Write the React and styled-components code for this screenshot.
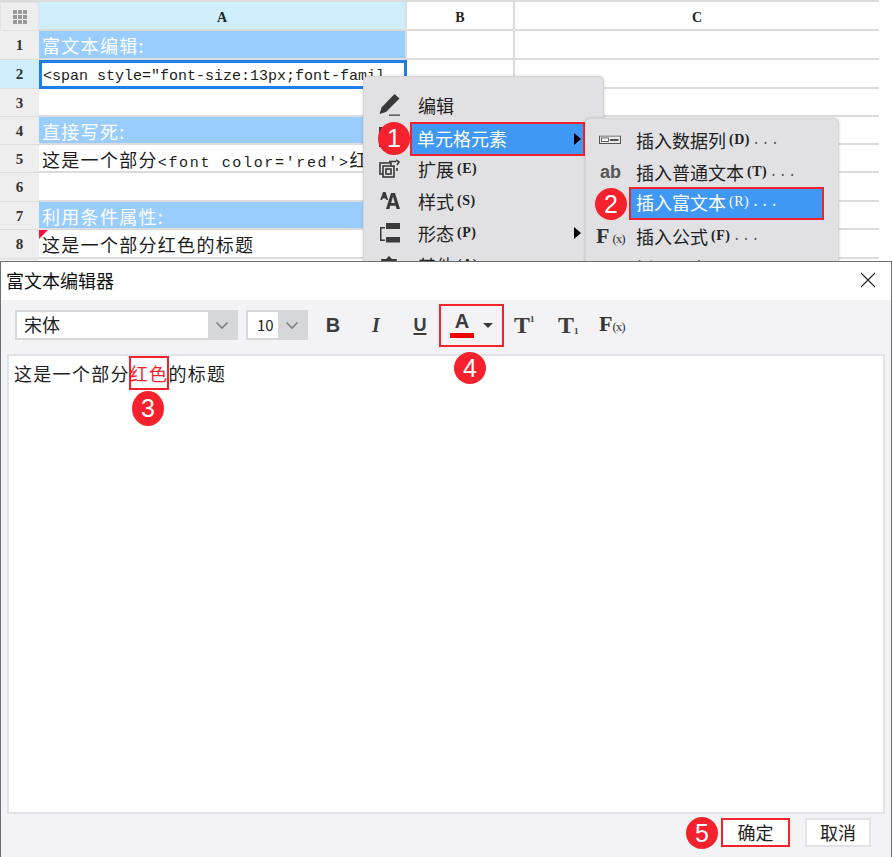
import React from "react";
import styled, { createGlobalStyle } from "styled-components";

const CJK = `"Noto Sans CJK SC", "Liberation Sans", sans-serif`;
const MONO = `"Liberation Mono", "Noto Sans CJK SC", monospace`;

const Global = createGlobalStyle`
  html, body { margin: 0; padding: 0; background: #fff; }
  body { font-family: ${CJK}; color: #1c1c1c; }
  * { box-sizing: border-box; }
`;

const Page = styled.div`
  width: 892px;
  height: 857px;
  overflow: hidden;
  display: flex;
  flex-direction: column;
  position: relative;
`;

const Sheet = styled.div`
  height: 261px;
  position: relative;
  overflow: hidden;
  background: #fff;
  flex: none;
`;

const Grid = styled.div`
  display: grid;
  width: 879px;
  border-top: 2px solid #dcdcdc;
  grid-template-columns: 39px 368px 108px 364px;
  grid-template-rows: 29px 29px 29px 28px 28px 28px 29px 28px 29px 28px;
`;

const Corner = styled.div`
  background: #eeeeee;
  border: 1px solid #e2e2e2;
  display: grid;
  grid-template-columns: repeat(3, 4px);
  grid-auto-rows: 4px;
  gap: 1px;
  justify-content: center;
  align-content: center;
  i { background: #9a9a9a; }
`;

const ColHead = styled.div`
  background: ${p => (p.$active ? "#cfeefb" : "#fff")};
  border-right: ${p => (p.$last ? "0" : "2px solid #dcdcdc")};
  border-bottom: 2px solid #dcdcdc;
  padding-top: 5px;
  display: flex;
  align-items: center;
  justify-content: center;
  font: bold 14px "Liberation Serif", serif;
  color: #222;
`;

const RowHead = styled.div`
  background: ${p => (p.$active ? "#cfeefb" : "#eeeeee")};
  border-bottom: 1px solid #dcdcdc;
  padding-top: 1px;
  display: flex;
  align-items: center;
  justify-content: center;
  font: bold 15px "Liberation Serif", serif;
  color: #333;
`;

const Cell = styled.div`
  position: relative;
  background: ${p => (p.$band ? "#99ccff" : "#fff")};
  color: ${p => (p.$band ? "#fff" : "#1c1c1c")};
  border-right: ${p => (p.$last ? "0" : "2px solid #dcdcdc")};
  border-bottom: 2px solid #dcdcdc;
  padding-left: 3px;
  font-size: 18px;
  letter-spacing: 1.3px;
  line-height: 28px;
  white-space: nowrap;
  overflow: hidden;
  ${p => p.$selected && "border: 3px solid #1f7ce8; line-height: 19px; padding-left: 1px;"}
`;

const Code = styled.span`
  font-family: ${MONO};
  font-size: 15px;
  letter-spacing: ${p => (p.$wide ? "1.65px" : "0")};
`;

const Flag = styled.i`
  position: absolute;
  left: 0;
  top: 0;
  border-top: 9px solid #f01040;
  border-right: 9px solid transparent;
`;

const Menu = styled.div`
  position: absolute;
  left: ${p => p.$x}px;
  top: ${p => p.$y}px;
  width: ${p => p.$w}px;
  padding-top: ${p => p.$pad}px;
  height: 300px;
  background: #e1e1e4;
  border: 1px solid #d5d5d8;
  border-radius: 5px;
  box-shadow: 0 0 3px rgba(0, 0, 0, 0.18);
`;

const MenuItem = styled.div`
  height: 32px;
  display: flex;
  align-items: center;
  position: relative;
  padding-left: ${p => p.$left}px;
  font-size: 18px;
  white-space: nowrap;
  color: #222;
  small {
    font: bold 14px "Liberation Serif", serif;
    margin-left: 3px;
    letter-spacing: 0.5px;
  }
  em {
    font: normal 14px "Liberation Mono", monospace;
    color: #555;
    letter-spacing: 1px;
    margin-left: 2px;
  }
`;

const Highlight = styled.div`
  position: absolute;
  left: ${p => p.$x}px;
  top: ${p => p.$y}px;
  width: ${p => p.$w}px;
  height: ${p => p.$h}px;
  background: #4098f5;
  border: 2px solid #f5222d;
  color: #fff;
  display: flex;
  align-items: center;
  padding: 0 0 3px 5px;
  font-size: 18px;
  white-space: nowrap;
  small { font: 14px "Liberation Serif", serif; margin-left: 3px; letter-spacing: 0.5px; }
  em { font: normal 14px "Liberation Mono", monospace; letter-spacing: 1px; margin-left: 2px; }
`;

const MenuIcon = styled.span`
  position: absolute;
  left: ${p => p.$left}px;
  top: 50%;
  transform: translateY(-50%);
  display: flex;
  color: #3a3a3a;
`;

const Arrow = styled.i`
  position: absolute;
  right: ${p => p.$right}px;
  top: 50%;
  margin-top: -6px;
  border-left: 7px solid #000;
  border-top: 6px solid transparent;
  border-bottom: 6px solid transparent;
`;

const Badge = styled.span`
  position: absolute;
  left: ${p => p.$x}px;
  top: ${p => p.$y}px;
  width: 32px;
  height: ${p => p.$h || 32}px;
  border-radius: 50%;
  background: #f5222d;
  color: #fff;
  font: 25px/32px "Liberation Sans", sans-serif;
  line-height: ${p => p.$h || 32}px;
  letter-spacing: 0;
  text-align: center;
  z-index: 5;
`;

const Dialog = styled.div`
  flex: 1;
  display: flex;
  flex-direction: column;
  border: 1px solid #6e6e6e;
  border-bottom: 0;
  background: #f3f3f5;
`;

const TitleBar = styled.div`
  height: 38px;
  flex: none;
  background: #fff;
  display: flex;
  align-items: center;
  justify-content: space-between;
  padding: 0 15px 3px 5px;
  font-size: 18px;
  color: #111;
`;

const Toolbar = styled.div`
  height: 54px;
  flex: none;
  display: flex;
  align-items: center;
  padding: 0 0 4px 14px;
`;

const Combo = styled.div`
  display: flex;
  width: ${p => p.$w}px;
  height: 30px;
  border: 2px solid #d6d7da;
  margin-right: ${p => p.$gap}px;
  background: #fff;
`;

const ComboText = styled.div`
  flex: 1;
  padding-left: ${p => p.$left}px;
  font-size: ${p => p.$size}px;
  line-height: 25px;
  color: #222;
`;

const ComboBtn = styled.div`
  width: 28px;
  background: #d6d7da;
  display: flex;
  align-items: center;
  justify-content: center;
`;

const ToolBtn = styled.span`
  width: ${p => p.$w}px;
  display: flex;
  justify-content: center;
  font: ${p => p.$font};
  color: #3c3c3c;
  text-decoration: ${p => (p.$u ? "underline" : "none")};
  text-decoration-thickness: 2px;
  text-underline-offset: 2px;
`;

const ColorBtn = styled.div`
  width: 65px;
  height: 43px;
  margin: 0 10px 0 -1px;
  border: 2px solid #f5222d;
  display: flex;
  align-items: center;
  justify-content: center;
  gap: 9px;
`;

const ColorA = styled.div`
  display: flex;
  flex-direction: column;
  align-items: center;
  font: bold 20px/19px "Liberation Sans", sans-serif;
  color: #3c3c3c;
  i { width: 24px; height: 5px; background: #ee0000; margin-top: 2px; }
`;

const Caret = styled.i`
  border-top: 5px solid #3c3c3c;
  border-left: 5px solid transparent;
  border-right: 5px solid transparent;
`;

const Script = styled.span`
  display: flex;
  width: ${p => p.$w}px;
  font: bold 24px/24px "Liberation Serif", serif;
  color: #3c3c3c;
  sup, sub { font-size: 9px; font-weight: bold; line-height: 1; }
  sup { margin-top: 2px; }
  sub { margin-top: 14px; }
`;

const Fx = styled.span`
  font: bold 22px/24px "Liberation Serif", serif;
  letter-spacing: 0;
  color: #333;
  small { font-size: 13px; font-weight: 400; letter-spacing: -1px; }
`;

const Editor = styled.div`
  height: 460px;
  flex: none;
  margin: 0 6px;
  border: 2px solid #e2e3e6;
  background: #fff;
  padding: 4px 5px;
  font-size: 18px;
  letter-spacing: 1.3px;
  line-height: 26px;
  color: #222;
`;

const Red = styled.span`
  color: #f5222d;
  outline: 2px solid #f5222d;
  outline-offset: -1px;
  padding: 3px 0;
`;

const Footer = styled.div`
  flex: 1;
  display: flex;
  justify-content: flex-end;
  align-items: center;
  gap: 15px;
  padding: 0 20px 6px 0;
`;

const Button = styled.div`
  width: ${p => p.$w}px;
  height: 29px;
  background: #fff;
  border: 2px solid ${p => (p.$primary ? "#f5222d" : "#e2e3e6")};
  display: flex;
  align-items: center;
  justify-content: center;
  padding-bottom: 1px;
  font-size: 18px;
  color: #222;
`;

const rows = [
  { n: 1, band: true, text: "富文本编辑:" },
  { n: 2, active: true, selected: true, code: `<span style="font-size:13px;font-famil` },
  { n: 3 },
  { n: 4, band: true, text: "直接写死:" },
  { n: 5, text: "这是一个部分", code: `<font color='red'>`, wide: true, tail: "红色的标题" },
  { n: 6 },
  { n: 7, band: true, text: "利用条件属性:" },
  { n: 8, text: "这是一个部分红色的标题", flag: true },
  { n: 9 }
];

const Pencil = () => (
  <svg width="22" height="23" viewBox="0 0 22 23" fill="currentColor">
    <path d="M15.5 0.5l5 4.5L7 18.5l-6.5 2L2.5 14z" />
    <path d="M10 21h11v1.2H10z" />
  </svg>
);
const Blank = () => (
  <svg width="22" height="20" viewBox="0 0 22 20" fill="none" stroke="currentColor" strokeWidth="2">
    <rect x="1" y="1" width="18" height="18" />
  </svg>
);
const Cells = () => (
  <svg width="22" height="20" viewBox="0 0 22 20" fill="none" stroke="currentColor" strokeWidth="1.6">
    <rect x="1" y="4" width="11" height="11" />
    <rect x="4" y="7" width="11" height="11" fill="#e1e1e4" />
    <rect x="7" y="10" width="5" height="5" />
    <path d="M10 2.5h7M17 1l3 2-2 3M18 9v3" />
  </svg>
);
const Styles = () => (
  <svg width="22" height="20" viewBox="0 0 22 20" fill="currentColor">
    <path d="M4 1h2.6l2.6 8H7.4L6.8 7.4H3.6L3 9H1.2z" />
    <path d="M12 2h4l5 16h-3.4l-1-3.2h-5.4L10.4 18H7zm2 3.5l-1.8 6.5h3.6z" />
  </svg>
);
const Form = () => (
  <svg width="22" height="20" viewBox="0 0 22 20" fill="currentColor">
    <rect x="7" y="0" width="14" height="6" />
    <rect x="7" y="14" width="14" height="5.5" />
    <path d="M1 4h5v1.5H2.5v11H6V18H1z" />
  </svg>
);
const Gear = () => (
  <svg width="20" height="20" viewBox="0 0 20 20" fill="currentColor">
    <path d="M10 1l3 3 5 0-1 5 2 3-3 2-1 5-5-1-5 1-1-5-3-2 2-3-1-5 5 0z" />
  </svg>
);
const ColumnIcon = () => (
  <svg width="22" height="9" viewBox="0 0 22 9">
    <rect x="0.5" y="0.5" width="21" height="7.5" fill="#e8e8e8" stroke="#555" />
    <rect x="2.5" y="2.5" width="7" height="3.5" fill="#fff" stroke="#444" strokeWidth="0.8" />
    <path d="M11 3.5h8.5v2H11z" fill="#555" />
  </svg>
);
const FxIcon = () => <Fx>F<small>(x)</small></Fx>;
const AbIcon = styled.b`
  font: bold 18px "Liberation Sans", sans-serif;
  color: #555;
`;
const Chart = () => (
  <svg width="20" height="20" viewBox="0 0 20 20" fill="#333">
    <rect x="3" y="8" width="6" height="12" />
    <rect x="11" y="4" width="6" height="16" />
  </svg>
);
const Chevron = () => (
  <svg width="14" height="9" viewBox="0 0 14 9" fill="none" stroke="#808080" strokeWidth="1.6">
    <path d="M1.5 1.5L7 7l5.5-5.5" />
  </svg>
);
const Close = () => (
  <svg width="16" height="16" viewBox="0 0 16 16" fill="none" stroke="#222" strokeWidth="1.1">
    <path d="M1 1l14 14M15 1L1 15" />
  </svg>
);

export default function App() {
  return (
    <Page>
      <Global />
      <Sheet>
        <Grid>
          <Corner>{Array.from({ length: 9 }, (_, i) => <i key={i} />)}</Corner>
          <ColHead $active>A</ColHead>
          <ColHead>B</ColHead>
          <ColHead $last>C</ColHead>
          {rows.map(r => (
            <React.Fragment key={r.n}>
              <RowHead $active={r.active}>{r.n}</RowHead>
              <Cell $band={r.band} $selected={r.selected}>
                {r.flag && <Flag />}
                {r.text}
                {r.code && <Code $wide={r.wide}>{r.code}</Code>}
                {r.tail}
              </Cell>
              <Cell />
              <Cell $last />
            </React.Fragment>
          ))}
        </Grid>

        <Menu $x={363} $y={76} $w={241} $pad={12}>
          <MenuItem $left={54}><MenuIcon $left={15}><Pencil /></MenuIcon>编辑</MenuItem>
          <MenuItem $left={54}><MenuIcon $left={15}><Blank /></MenuIcon></MenuItem>
          <MenuItem $left={54}><MenuIcon $left={15}><Cells /></MenuIcon>扩展<small>(E)</small></MenuItem>
          <MenuItem $left={54}><MenuIcon $left={15}><Styles /></MenuIcon>样式<small>(S)</small></MenuItem>
          <MenuItem $left={54}><MenuIcon $left={15}><Form /></MenuIcon>形态<small>(P)</small><Arrow $right={22} /></MenuItem>
          <MenuItem $left={54}><MenuIcon $left={15}><Gear /></MenuIcon>其他<small>(A)</small></MenuItem>
        </Menu>
        <Highlight $x={410} $y={122} $w={175} $h={34}>
          单元格元素<Arrow $right={2} />
        </Highlight>

        <Menu $x={585} $y={118} $w={254} $pad={5}>
          <MenuItem $left={50}><MenuIcon $left={13}><ColumnIcon /></MenuIcon>插入数据列<small>(D)</small><em>...</em></MenuItem>
          <MenuItem $left={50}><MenuIcon $left={14}><AbIcon>ab</AbIcon></MenuIcon>插入普通文本<small>(T)</small><em>...</em></MenuItem>
          <MenuItem $left={50} />
          <MenuItem $left={50}><MenuIcon $left={10}><FxIcon /></MenuIcon>插入公式<small>(F)</small><em>...</em></MenuItem>
          <MenuItem $left={50}><MenuIcon $left={14}><Chart /></MenuIcon>插入图表<small>(C)</small><em>...</em></MenuItem>
        </Menu>
        <Highlight $x={629} $y={187} $w={195} $h={33}>
          插入富文本<small>(R)</small><em>...</em>
        </Highlight>

        <Badge $x={378} $y={122} $h={33}>1</Badge>
        <Badge $x={595} $y={188}>2</Badge>
      </Sheet>

      <Dialog>
        <TitleBar>富文本编辑器<Close /></TitleBar>
        <Toolbar>
          <Combo $w={223} $gap={8}>
            <ComboText $left={7} $size={18}>宋体</ComboText>
            <ComboBtn><Chevron /></ComboBtn>
          </Combo>
          <Combo $w={62} $gap={6}>
            <ComboText $left={9} $size={15}>10</ComboText>
            <ComboBtn><Chevron /></ComboBtn>
          </Combo>
          <ToolBtn $w={38} $font={`bold 20px "Liberation Sans", sans-serif`}>B</ToolBtn>
          <ToolBtn $w={48} $font={`italic bold 20px "Liberation Serif", serif`}>I</ToolBtn>
          <ToolBtn $w={40} $u $font={`bold 18px "Liberation Sans", sans-serif`}>U</ToolBtn>
          <ColorBtn>
            <ColorA>A<i /></ColorA>
            <Caret />
          </ColorBtn>
          <Script $w={44}>T<sup>1</sup></Script>
          <Script $w={41}>T<sub>1</sub></Script>
          <FxIcon />
        </Toolbar>
        <Editor>
          这是一个部分<Red>红色</Red>的标题
        </Editor>
        <Badge $x={132} $y={391} $h={35}>3</Badge>
        <Badge $x={454} $y={352}>4</Badge>
        <Footer>
          <Badge $x={686} $y={817}>5</Badge>
          <Button $primary $w={69}>确定</Button>
          <Button $w={66}>取消</Button>
        </Footer>
      </Dialog>
    </Page>
  );
}
